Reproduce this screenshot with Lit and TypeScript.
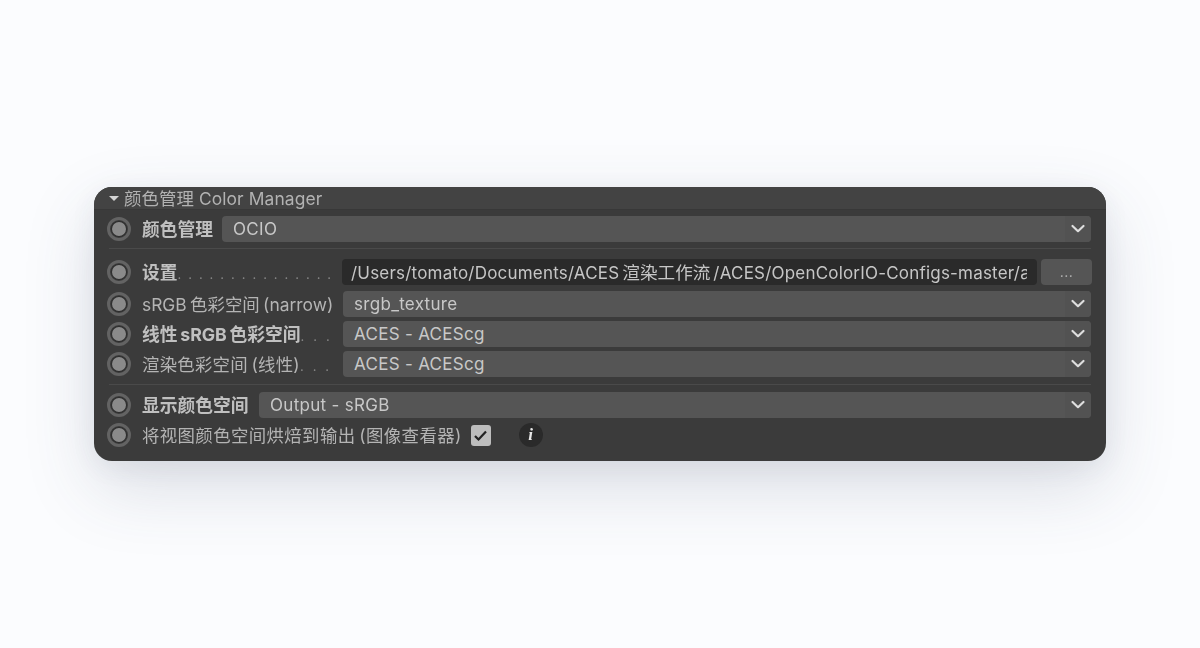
import { LitElement, html, css } from "lit";
import { customElement } from "lit/decorators.js";

const chevron = html`<span class="chevbox"><svg width="16" height="10" viewBox="0 0 16 10"><path d="M2.5 2 L8 7.2 L13.5 2" fill="none" stroke="#dedede" stroke-width="2.2" stroke-linecap="round" stroke-linejoin="round"/></svg></span>`;

@customElement("app-root")
export class AppRoot extends LitElement {
  static styles = css`
    :host { display: block; width: 1200px; height: 648px; background: #fbfcfe; overflow: hidden;
      font-family: Inter, "Noto Sans CJK SC", sans-serif; }
    .stage { height: 648px; box-sizing: border-box; padding: 187px 94px 0; }
    .panel { width: 1012px; height: 274px; box-sizing: border-box; border-radius: 18px; background: #3b3b3b; color: #bdbdbd;
      box-shadow: 0 26px 70px rgba(60,70,100,.17), 0 6px 26px rgba(60,70,100,.07); overflow: hidden; font-size: 17.4px; }
    .inner { filter: blur(.55px); }
    .head { height: 23px; background: #434343; display: flex; align-items: center; padding-left: 15px; gap: 5px; box-sizing: border-box;
      border-bottom: 1px solid #383838; color: #b2b2b2; letter-spacing: .1px; }
    .head-text { padding-bottom: 2px; }
    .tri { width: 0; height: 0; border-left: 5px solid transparent; border-right: 5px solid transparent; border-top: 5.5px solid #d4d4d4; }
    .body { padding: 6px 15px 0 13px; display: flex; flex-direction: column; }
    .row { display: flex; align-items: center; height: 26px; gap: 9px; margin-bottom: 4px; }
    .row.set { margin-top: 10px; margin-bottom: 6px; }
    .radio { width: 24px; height: 24px; box-sizing: border-box; border-radius: 50%; border: 3px solid #636363; display: flex; align-items: center; justify-content: center; flex: none; margin-right: 2px; }
    .radio::after { content: ""; width: 14px; height: 14px; border-radius: 50%; background: #8a8a8a; box-shadow: 0 0 0 1px #2e2e2e; }
    .label { white-space: nowrap; flex: none; display: flex; align-items: baseline; color: #b4b4b4; word-spacing: -1.5px; padding-bottom: 2px; }
    .label.b { font-weight: 700; color: #c0c0c0; font-size: 17.75px; }
    .w192 { width: 192px; }
    .wide { letter-spacing: .4px; }
    .mid { letter-spacing: .25px; }
    .disp { margin-right: 1.5px; }
    .dots { flex: 1; overflow: hidden; color: #8a8a8a; font-size: 13px; font-weight: 400; text-align: right; white-space: nowrap; padding-right: 3px; word-spacing: 0; }
    .d15 { letter-spacing: 1.65px; }
    .d3 { letter-spacing: 2.65px; }
    .sel { flex: 1; min-width: 0; height: 26px; box-sizing: border-box; background: #555; border-radius: 4px; color: #c8c8c8; display: flex; align-items: center;
      justify-content: space-between; padding-left: 11px; font-size: 17px; letter-spacing: .3px; }
    .chevbox { flex: none; width: 26px; height: 26px; display: flex; align-items: center; justify-content: center; background: #525252; border-radius: 0 4px 4px 0; }
    .sep { height: 1px; background: #4a4a4a; margin: 2px 0 0 2px; }
    .sep.s2 { margin: 3px 0 7px 2px; }
    .input { flex: 1; min-width: 0; height: 26px; box-sizing: border-box; background: #2a2a2a; border-radius: 4px; color: #c6c6c6; padding: 0 10px 0 9px; display: flex; align-items: center; white-space: nowrap; overflow: hidden; font-size: 17px; letter-spacing: .2px; margin-left: -1px; }
    .input span.path { display: block; overflow: hidden; width: 100%; padding-bottom: 2px; }
    .cj { font-size: 17.6px; margin: 0 3px; letter-spacing: 0; }
    .btn { width: 51px; height: 26px; flex: none; background: #555; border-radius: 4px; color: #b5b5b5; text-align: center; line-height: 26px; font-size: 14px; letter-spacing: .5px; margin-left: -5px; margin-right: -1px; }
    .check { width: 20px; height: 21px; border-radius: 3px; background: #bdbdbd; display: flex; align-items: center; justify-content: center; flex: none; }
    .info { width: 24px; height: 24px; border-radius: 50%; background: #2a2a2a; color: #e8e8e8; font-family: "Liberation Serif", serif; font-style: italic; font-weight: 700; font-size: 17px; line-height: 24px; text-align: center; flex: none; margin-left: 19px; }
  `;

  render() {
    const radio = html`<span class="radio"></span>`;
    return html`<div class="stage"><div class="panel"><div class="inner">
      <div class="head"><span class="tri"></span><span class="head-text">颜色管理 Color Manager</span></div>
      <div class="body">
        <div class="row">${radio}<span class="label b">颜色管理</span><div class="sel"><span>OCIO</span>${chevron}</div></div>
        <div class="sep"></div>
        <div class="row set">${radio}<span class="label b w192">设置<span class="dots d15">. . . . . . . . . . . . . . .</span></span>
          <div class="input"><span class="path">/Users/tomato/Documents/ACES<span class="cj">渲染工作流</span>/ACES/OpenColorIO-Configs-master/aces_1.2/config.ocio</span></div><div class="btn">...</div></div>
        <div class="row">${radio}<span class="label w192">sRGB 色彩空间 (narrow)</span><div class="sel"><span>srgb_texture</span>${chevron}</div></div>
        <div class="row">${radio}<span class="label b w192">线性 sRGB 色彩空间<span class="dots d3">. . .</span></span><div class="sel"><span>ACES - ACEScg</span>${chevron}</div></div>
        <div class="row">${radio}<span class="label mid w192">渲染色彩空间 (线性)<span class="dots d3">. . .</span></span><div class="sel"><span>ACES - ACEScg</span>${chevron}</div></div>
        <div class="sep s2"></div>
        <div class="row">${radio}<span class="label b disp">显示颜色空间</span><div class="sel"><span>Output - sRGB</span>${chevron}</div></div>
        <div class="row">${radio}<span class="label wide">将视图颜色空间烘焙到输出 (图像查看器)</span>
          <span class="check"><svg width="15" height="13" viewBox="0 0 15 13"><path d="M2 7 L5.5 10.5 L13 2.5" fill="none" stroke="#222" stroke-width="2.2"/></svg></span>
          <span class="info">i</span></div>
      </div>
    </div></div></div>`;
  }
}
